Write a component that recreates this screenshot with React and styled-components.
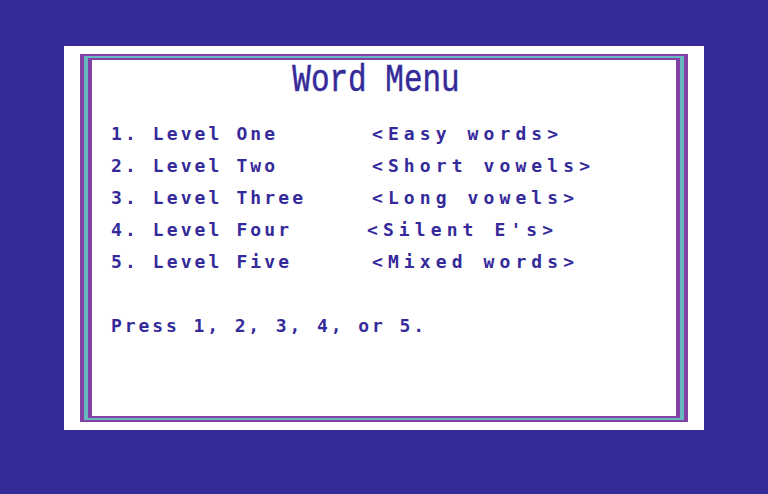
import React from "react";
import styled, { createGlobalStyle } from "styled-components";

const colors = {
	blue: "#352a99",
	purple: "#8340a4",
	cyan: "#68b6c0",
	white: "#ffffff",
};

const GlobalStyle = createGlobalStyle`
	html, body {
		margin: 0;
		padding: 0;
		background-color: ${colors.blue};
	}
`;

const Screen = styled.div`
	width: 768px;
	height: 494px;
	padding: 46px 64px 0;
	box-sizing: border-box;
`;

const Paper = styled.div`
	width: 640px;
	height: 384px;
	background-color: ${colors.white};
	padding: 8px 16px;
	box-sizing: border-box;
`;

// triple stripe: purple / cyan / purple
const FrameOuter = styled.div`
	height: 100%;
	box-sizing: border-box;
	border: solid ${colors.purple};
	border-width: 2px 4px;
	background-color: ${colors.cyan};
	padding: 2px 4px;
`;

const FrameInner = styled.div`
	height: 100%;
	box-sizing: border-box;
	border: solid ${colors.purple};
	border-width: 2px 4px;
	background-color: ${colors.white};
	padding: 0 0 0 19px;
	color: ${colors.blue};
	font-family: "DejaVu Sans Mono", "Liberation Mono", monospace;
	font-weight: bold;
`;

const Title = styled.h1`
	margin: 0;
	padding-right: 35px;
	height: 44px;
	text-align: center;
	font-family: "Liberation Mono", "DejaVu Sans Mono", monospace;
	font-weight: normal;
	font-size: 31px;
	line-height: 44px;
	-webkit-text-stroke: 0.4px ${colors.blue};
	transform: scaleY(1.28);
	transform-origin: 50% 60%;
`;

const Menu = styled.div`
	display: grid;
	grid-template-columns: 261px auto;
	margin-top: 14px;
`;

const Cell = styled.div`
	height: 32px;
	line-height: 32px;
	font-size: 18px;
	letter-spacing: ${(p) => p.$spacing}px;
	white-space: pre;
	margin-left: ${(p) => p.$shift || 0}px;
`;

const Prompt = styled.div`
	margin-top: 32px;
	height: 32px;
	line-height: 32px;
	font-size: 18px;
	letter-spacing: 2.9px;
	white-space: pre;
`;

const levels = [
	["1. Level One", "<Easy words>"],
	["2. Level Two", "<Short vowels>"],
	["3. Level Three", "<Long vowels>"],
	["4. Level Four", "<Silent E's>", -5],
	["5. Level Five", "<Mixed words>"],
];

export default function App() {
	return (
		<>
			<GlobalStyle />
			<Screen>
				<Paper>
					<FrameOuter>
						<FrameInner>
							<Title>Word Menu</Title>
							<Menu>
								{levels.map(([name, desc, shift]) => (
									<React.Fragment key={name}>
										<Cell $spacing={3.1}>{name}</Cell>
										<Cell $spacing={5.1} $shift={shift}>
											{desc}
										</Cell>
									</React.Fragment>
								))}
							</Menu>
							<Prompt>Press 1, 2, 3, 4, or 5.</Prompt>
						</FrameInner>
					</FrameOuter>
				</Paper>
			</Screen>
		</>
	);
}
